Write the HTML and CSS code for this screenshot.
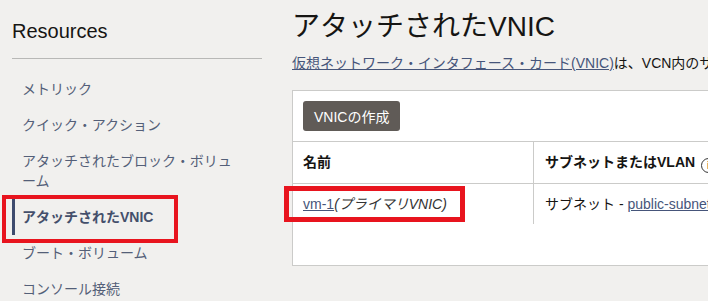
FILE: index.html
```html
<!DOCTYPE html>
<html>
<head>
    <title>アタッチされたVNIC</title>
    <link rel="stylesheet" href="styles.css">
</head>
<body>
    <div class="page">
        <div class="sidebar">
            <h2 class="sidebar-title">Resources</h2>
            <ul class="menu">
                <li class="menu-item">メトリック</li>
                <li class="menu-item">クイック・アクション</li>
                <li class="menu-item">アタッチされたブロック・ボリューム</li>
                <li class="menu-item active">アタッチされたVNIC</li>
                <li class="menu-item">ブート・ボリューム</li>
                <li class="menu-item">コンソール接続</li>
            </ul>
            <div class="mark mark-menu"></div>
        </div>
        <div class="main">
            <h1 class="title">アタッチされたVNIC</h1>
            <p class="desc"><a href="#">仮想ネットワーク・インタフェース・カード(VNIC)</a>は、VCN内のサブネットにインスタンスを接続します。</p>
            <div class="card">
                <div class="toolbar">
                    <button class="btn">VNICの作成</button>
                </div>
                <div class="row head">
                    <div class="cell">名前</div>
                    <div class="cell">サブネットまたはVLAN <span class="info">i</span></div>
                </div>
                <div class="row">
                    <div class="cell"><a href="#">vm-1</a><em>(プライマリVNIC)</em></div>
                    <div class="cell">サブネット - <a href="#">public-subnet</a></div>
                </div>
                <div class="mark mark-row"></div>
            </div>
        </div>
    </div>
</body>
</html>
```

FILE: styles.css
```css
body {
    margin: 0;
    background-color: #f1f0ee;
    font-family: "Liberation Sans", "Noto Sans CJK JP", sans-serif;
    color: #161513;
    overflow: hidden;
}

a {
    color: #46557a;
}

.page {
    display: flex;
    height: 301px;
}

.sidebar {
    position: relative;
    width: 250px;
    flex: none;
    padding-left: 12px;
}

.sidebar-title {
    margin: 0;
    padding: 19px 0 15px;
    font-size: 20px;
    font-weight: normal;
    line-height: 24px;
    border-bottom: 1px solid #b8b8b6;
}

.menu {
    list-style: none;
    margin: 12px 0 0;
    padding: 0;
}

.menu-item {
    padding: 8px 20px 8px 10px;
    font-size: 14px;
    line-height: 20px;
    color: #545f78;
}

.menu-item.active {
    border-left: 3px solid #3e4b6e;
    padding-left: 7px;
    font-weight: bold;
    color: #444f6b;
}

.main {
    flex: 1;
    min-width: 0;
    padding-left: 30px;
    overflow: hidden;
}

.title {
    margin: 0;
    padding-top: 9px;
    font-size: 28px;
    font-weight: normal;
    line-height: 36px;
}

.desc {
    margin: 8px 0 0;
    font-size: 14px;
    line-height: 20px;
    white-space: nowrap;
}

.card {
    position: relative;
    width: 640px;
    margin-top: 17px;
    padding-bottom: 41px;
    background-color: #fff;
    border: 1px solid #cbcbc9;
}

.toolbar {
    padding: 10px;
}

.btn {
    display: block;
    height: 30px;
    padding: 0 11px;
    border: none;
    border-radius: 3px;
    background-color: #605b57;
    color: #fff;
    font-family: inherit;
    font-size: 14px;
}

.row {
    display: grid;
    grid-template-columns: 240px 1fr;
    border-top: 1px solid #cbcbc9;
    font-size: 14px;
}

.row:last-of-type {
    border-bottom: 1px solid #cbcbc9;
}

.cell {
    padding: 0 10px;
    line-height: 40px;
    white-space: nowrap;
}

.cell + .cell {
    border-left: 1px solid #cbcbc9;
    padding-left: 11px;
}

.head .cell {
    line-height: 41px;
    font-weight: bold;
}

.info {
    display: inline-block;
    width: 13px;
    height: 13px;
    margin-left: 2px;
    border: 1px solid #333;
    border-radius: 50%;
    font-size: 10px;
    line-height: 13px;
    text-align: center;
    vertical-align: -2px;
}

.cell em {
    color: #333;
}

.mark {
    position: absolute;
    border: 4px solid #e8141e;
}

.mark-menu {
    left: 2px;
    top: 195px;
    width: 168px;
    height: 40px;
}

.mark-row {
    left: -9px;
    top: 95px;
    width: 171px;
    height: 26px;
    border-width: 5px;
}
```
